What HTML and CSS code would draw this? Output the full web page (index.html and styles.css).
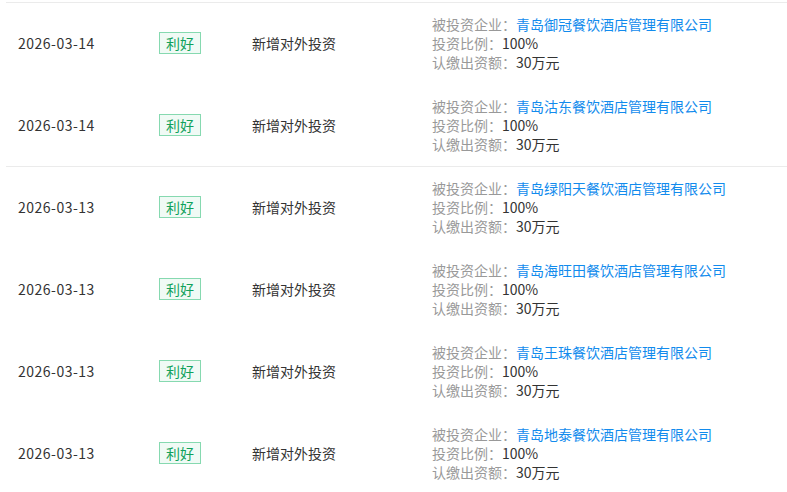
FILE: index.html
```html
<!DOCTYPE html>
<html lang="zh">
<head>
<meta charset="utf-8">
<link rel="stylesheet" href="styles.css">
</head>
<body>
<div class="list">
  <div class="row">
    <div class="date">2026-03-14</div>
    <div><span class="tag">利好</span></div>
    <div class="type">新增对外投资</div>
    <div class="detail">
      <div><span class="label">被投资企业：</span><a class="link">青岛御冠餐饮酒店管理有限公司</a></div>
      <div><span class="label">投资比例：</span>100%</div>
      <div><span class="label">认缴出资额：</span>30万元</div>
    </div>
  </div>
  <div class="row sep">
    <div class="date">2026-03-14</div>
    <div><span class="tag">利好</span></div>
    <div class="type">新增对外投资</div>
    <div class="detail">
      <div><span class="label">被投资企业：</span><a class="link">青岛沽东餐饮酒店管理有限公司</a></div>
      <div><span class="label">投资比例：</span>100%</div>
      <div><span class="label">认缴出资额：</span>30万元</div>
    </div>
  </div>
  <div class="row">
    <div class="date">2026-03-13</div>
    <div><span class="tag">利好</span></div>
    <div class="type">新增对外投资</div>
    <div class="detail">
      <div><span class="label">被投资企业：</span><a class="link">青岛绿阳天餐饮酒店管理有限公司</a></div>
      <div><span class="label">投资比例：</span>100%</div>
      <div><span class="label">认缴出资额：</span>30万元</div>
    </div>
  </div>
  <div class="row">
    <div class="date">2026-03-13</div>
    <div><span class="tag">利好</span></div>
    <div class="type">新增对外投资</div>
    <div class="detail">
      <div><span class="label">被投资企业：</span><a class="link">青岛海旺田餐饮酒店管理有限公司</a></div>
      <div><span class="label">投资比例：</span>100%</div>
      <div><span class="label">认缴出资额：</span>30万元</div>
    </div>
  </div>
  <div class="row">
    <div class="date">2026-03-13</div>
    <div><span class="tag">利好</span></div>
    <div class="type">新增对外投资</div>
    <div class="detail">
      <div><span class="label">被投资企业：</span><a class="link">青岛王珠餐饮酒店管理有限公司</a></div>
      <div><span class="label">投资比例：</span>100%</div>
      <div><span class="label">认缴出资额：</span>30万元</div>
    </div>
  </div>
  <div class="row">
    <div class="date">2026-03-13</div>
    <div><span class="tag">利好</span></div>
    <div class="type">新增对外投资</div>
    <div class="detail">
      <div><span class="label">被投资企业：</span><a class="link">青岛地泰餐饮酒店管理有限公司</a></div>
      <div><span class="label">投资比例：</span>100%</div>
      <div><span class="label">认缴出资额：</span>30万元</div>
    </div>
  </div>
</div>
</body>
</html>
```

FILE: styles.css
```css
html, body {
  margin: 0;
  padding: 0;
  background: #fff;
}
body {
  font-family: "Noto Sans CJK SC", "Noto Sans", sans-serif;
  font-size: 14px;
  color: #333;
  overflow: hidden;
}
.list {
  margin: 2px 0 0 6px;
  border-top: 1px solid #ebebeb;
}
.row {
  display: grid;
  grid-template-columns: 141px 93px 180px 1fr;
  align-items: center;
  height: 79px;
  padding: 0 0 2px 12px;
  border-bottom: 1px solid transparent;
}
.row.sep {
  border-bottom-color: #ebebeb;
}
.date {
  font-size: 14px;
  line-height: 20px;
  letter-spacing: 0.5px;
}
.tag {
  display: inline-block;
  height: 20px;
  line-height: 20px;
  padding: 0 6px;
  border: 1px solid #86d9b0;
  background: #f0faf5;
  color: #10a15b;
  font-size: 14px;
}
.type {
  line-height: 20px;
}
.detail {
  line-height: 19px;
  padding-top: 1px;
}
.label {
  color: #999;
}
.link {
  color: #128bed;
  text-decoration: none;
}
```
